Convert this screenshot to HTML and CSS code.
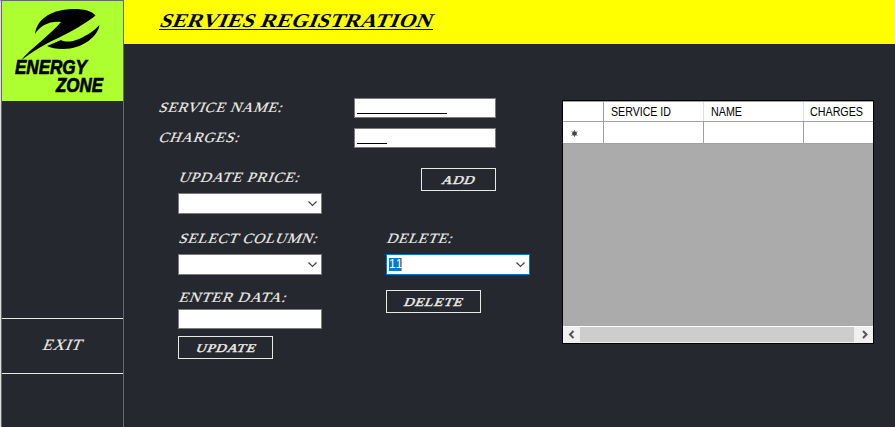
FILE: index.html
```html
<!DOCTYPE html>
<html lang="en">
<head>
<meta charset="utf-8">
<title>Servies Registration</title>
<link rel="stylesheet" href="styles.css">
</head>
<body>
<div class="window">
  <aside class="sidebar">
    <div class="logo">
      <svg width="121" height="100" viewBox="2 1 121 100">
        <path d="M35 34C37 18 53 9 74 9C84 9 92 11 95.500 15.500C89 21 76 29 64 35C50 42 35 49 21 60.500C30 49 49 36 61 22C49 21 40 26 35 34Z"/>
        <path d="M47 46L61 40C65 42.500 72 42 79 39C88 35 95 30 99.500 25C98 36 83 49 63 49C56 49 51 48 47 46Z"/>
        <text class="brand" x="15" y="74" textLength="72" lengthAdjust="spacingAndGlyphs">ENERGY</text>
        <text class="brand" x="56" y="91.500" textLength="47" lengthAdjust="spacingAndGlyphs">ZONE</text>
      </svg>
    </div>
    <div class="exit">
      <svg width="121" height="54"><text class="caps exit-text" x="40" y="31" textLength="39" lengthAdjust="spacingAndGlyphs">EXIT</text></svg>
    </div>
  </aside>
  <main class="main">
    <header class="header">
      <svg width="330" height="44"><text class="title" x="35" y="27" textLength="272" lengthAdjust="spacingAndGlyphs">SERVIES REGISTRATION</text><rect x="35" y="29" width="274" height="1"/></svg>
    </header>
    <div class="content">
      <section class="form">
        <div class="row">
          <svg width="196" height="20"><text class="caps" x="0" y="14" textLength="124" lengthAdjust="spacingAndGlyphs">SERVICE NAME:</text></svg>
          <div class="field"><div class="blank long"></div></div>
        </div>
        <div class="row">
          <svg width="196" height="20"><text class="caps" x="0" y="14" textLength="81" lengthAdjust="spacingAndGlyphs">CHARGES:</text></svg>
          <div class="field"><div class="blank short"></div></div>
        </div>
        <div class="panels">
          <div class="panel">
            <svg width="160" height="25"><text class="caps" x="0" y="14" textLength="121" lengthAdjust="spacingAndGlyphs">UPDATE PRICE:</text></svg>
            <div class="combo"><svg class="chevron" width="9" height="6"><path d="M.5.5L4.500 4.500L8.500.5"/></svg></div>
            <svg width="160" height="40"><text class="caps" x="0" y="29" textLength="139" lengthAdjust="spacingAndGlyphs">SELECT COLUMN:</text></svg>
            <div class="combo"><svg class="chevron" width="9" height="6"><path d="M.5.5L4.500 4.500L8.500.5"/></svg></div>
            <svg width="160" height="34"><text class="caps" x="0" y="27" textLength="108" lengthAdjust="spacingAndGlyphs">ENTER DATA:</text></svg>
            <div class="field wide"></div>
            <div class="button update"><svg width="93" height="21"><text class="caps btn-text" x="16" y="15" textLength="60" lengthAdjust="spacingAndGlyphs">UPDATE</text></svg></div>
          </div>
          <div class="panel">
            <div class="button add"><svg width="73" height="21"><text class="caps btn-text" x="19" y="15" textLength="33" lengthAdjust="spacingAndGlyphs">ADD</text></svg></div>
            <svg width="144" height="63"><text class="caps" x="0" y="52" textLength="66" lengthAdjust="spacingAndGlyphs">DELETE:</text></svg>
            <div class="combo focused"><span class="selected">11</span><svg class="chevron" width="9" height="6"><path d="M.5.5L4.500 4.500L8.500.5"/></svg></div>
            <div class="button delete"><svg width="93" height="21"><text class="caps btn-text" x="16" y="15" textLength="59" lengthAdjust="spacingAndGlyphs">DELETE</text></svg></div>
          </div>
        </div>
      </section>
      <section class="grid">
        <div class="cells head">
          <div></div>
          <div><svg width="90" height="19"><text x="7" y="14" textLength="60" lengthAdjust="spacingAndGlyphs">SERVICE ID</text></svg></div>
          <div><svg width="90" height="19"><text x="7" y="14" textLength="31" lengthAdjust="spacingAndGlyphs">NAME</text></svg></div>
          <div><svg width="69" height="19"><text x="6" y="14" textLength="53" lengthAdjust="spacingAndGlyphs">CHARGES</text></svg></div>
        </div>
        <div class="cells body">
          <div><svg class="star" width="7" height="7"><path d="M3.500 0V7M.5 1.500L6.500 5.500M6.500 1.500L.5 5.500"/><circle cx="3.500" cy="3.500" r="2.300"/></svg></div>
          <div></div><div></div><div></div>
        </div>
        <div class="scrollbar">
          <svg width="17" height="15"><path d="M10.500 4L7 7.500L10.500 11"/></svg>
          <div class="thumb"></div>
          <svg width="19" height="15"><path d="M9 4L12.500 7.500L9 11"/></svg>
        </div>
      </section>
    </div>
  </main>
</div>
</body>
</html>
```
FILE: styles.css
```css
* { box-sizing: border-box; }
body { margin: 0; background: #25282f; overflow: hidden; }
svg { display: block; flex: none; overflow: visible; }

.window { display: flex; width: 895px; height: 427px; }

.sidebar {
  display: flex;
  flex-direction: column;
  width: 124px;
  border-left: 1px solid #dedede;
  border-right: 1px solid #696969;
  border-top: 1px solid #696969;
  box-shadow: inset 1px 0 #696969;
  padding-left: 1px;
}
.logo { height: 100px; background: #adff2f; }
.brand { font: italic bold 20px "Liberation Sans Narrow", "Liberation Sans", sans-serif; stroke: #000; stroke-width: .7px; }
.exit { height: 56px; margin-top: 217px; border: solid #e8e8e5; border-width: 1px 0; }

.main { flex: 1; }
.header { height: 44px; background: #ff0; }
.title, .caps { transform: skewX(-22deg); transform-box: fill-box; transform-origin: 0 80%; }
.title { font: bold 19.5px "Liberation Serif", serif; letter-spacing: .5px; }
.caps { font: 14px "Liberation Serif", serif; letter-spacing: .6px; fill: #ecebe6; stroke: #ecebe6; stroke-width: .15px; }
.btn-text { font-size: 12px; stroke-width: .4px; }
.exit-text { font-size: 15.5px; }

.content { display: flex; padding: 54px 0 0 34px; }
.form { width: 372px; }
.row { display: flex; margin-bottom: 10px; }
.field { width: 142px; height: 20px; border: 1px solid #7a7a7a; background: #fff; padding: 14px 0 0 2px; }
.wide { width: 144px; }
.blank { height: 1px; background: #000; }
.long { width: 90px; }
.short { width: 30px; }

.panels { display: grid; grid-template-columns: 208px 144px; padding: 10px 0 0 20px; }
.combo {
  display: flex;
  align-items: center;
  width: 144px;
  height: 21px;
  padding: 0 4px 0 2px;
  border: 1px solid #7a7a7a;
  background: #fff;
}
.focused { border-color: #0078d7; }
.chevron { margin-left: auto; }
.chevron path { fill: none; stroke: #444; stroke-width: 1.2px; }
.selected {
  width: 13px;
  height: 13px;
  margin-bottom: 1px;
  background: #0078d7;
  color: #fff;
  font: 12px/13px "Liberation Sans", sans-serif;
  font-kerning: none;
  border-right: 1px solid #e8883a;
}
.button { height: 23px; width: 95px; border: 1px solid #e8e8e5; }
.update { margin-top: 7px; }
.add { width: 75px; margin-left: 35px; }
.delete { margin-top: 15px; }

.grid {
  display: flex;
  flex-direction: column;
  width: 312px;
  height: 244px;
  margin: 2px 0 0 32px;
  border: 1px solid #000;
  background: #ababab;
}
.cells { display: grid; grid-template-columns: 41px 100px 100px 69px; background: #fff; }
.cells > div { border-right: 1px solid #a0a0a0; }
.cells > div:last-child { border-right: 0; }
.head { height: 21px; border-top: 1px solid #a0a0a0; border-bottom: 1px solid #a0a0a0; }
.head > div { border-color: #dedede; }
.head > div:first-child { border-color: #a0a0a0; }
.head text { font: 12px "Liberation Sans", sans-serif; fill: #000; }
.body { height: 22px; border-bottom: 1px solid #a0a0a0; }
.star { margin: 8px 0 0 8px; }
.star path { stroke: #777; }
.star circle { fill: #444; }
.scrollbar { display: flex; height: 17px; margin-top: auto; background: #f0f0f0; border-top: 1px solid #fff; border-bottom: 1px solid #f0f0f0; }
.scrollbar path { fill: none; stroke: #555; stroke-width: 2px; }
.thumb { width: 274px; background: #cdcdcd; }
```
